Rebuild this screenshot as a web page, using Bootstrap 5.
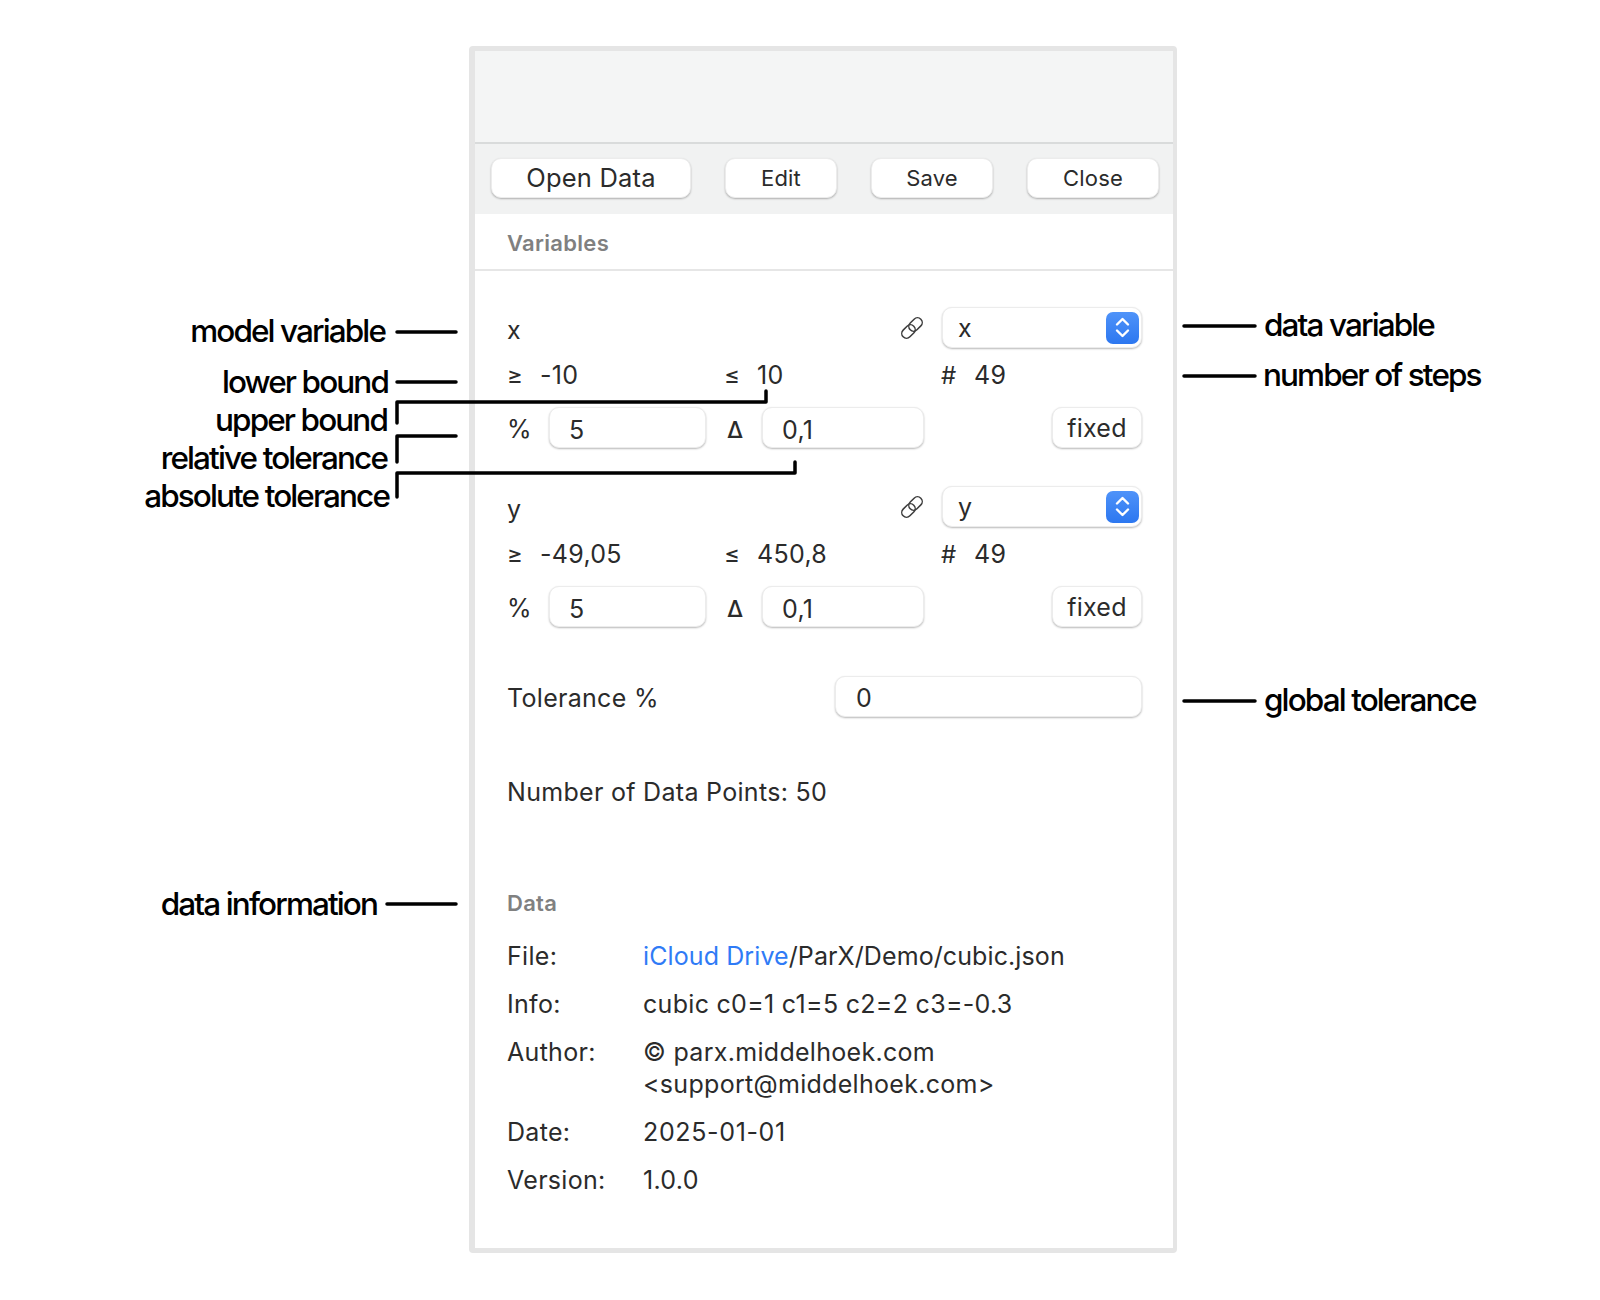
<!DOCTYPE html>
<html lang="en">
<head>
<meta charset="utf-8">
<title>ParX variables</title>
<link href="https://cdn.jsdelivr.net/npm/bootstrap@5.3.0/dist/css/bootstrap.min.css" rel="stylesheet">
<style>
html,body{margin:0;background:#fff;}
body{font-family:Inter,"Liberation Sans",sans-serif;color:#2b2b2b;font-size:25px;line-height:32px;letter-spacing:.3px;}
.stage{position:relative;width:1600px;height:1300px;padding:46px 0 0 469px;}
.panel-box{width:708px;height:1207px;border:5px solid #e5e5e5;border-left-width:6px;border-right-width:4px;border-radius:4px;background:#fff;}
.title-area{height:93px;background:#f4f5f5;border-bottom:2px solid #d9dbdb;}
.tool-area{height:70px;background:#f1f2f2;padding:14px 0 0 16px;gap:34px;}
.mac-btn{background:#fff;border:1px solid #ececec;border-radius:10px;box-shadow:0 1px 2px rgba(0,0,0,.28);color:#2b2b2b;height:40px;padding:0;font-size:22px;line-height:38px;letter-spacing:.2px;}
.mac-btn:hover{background:#fff;color:#2b2b2b;border-color:#ececec;}
.btn-open{width:200px;font-size:25.5px;}
.btn-edit{width:112px;}
.btn-save{width:122px;}
.btn-close-win{width:132px;}
.section-head{height:57px;border-bottom:2px solid #e6e6e6;padding-left:32px;color:#808080;font-size:22px;font-weight:600;line-height:58px;}
.body-area{padding:36px 31px 0 32px;}
.row-top{height:41px;}
.row-top .var-name{margin-top:4px;}
.link-ico{margin:0 17px 0 auto;width:26px;height:26px;}
.mac-select{width:200px;height:41px;border:1px solid #ececec;border-radius:10px;box-shadow:0 1px 2px rgba(0,0,0,.28);background:#fff;padding:0 2px 0 15px;}
.sel-arrows{width:33px;height:32px;border-radius:7px;background:linear-gradient(#4f93f9,#2c77f0);}
.row-bounds{display:grid;grid-template-columns:217px 217px 1fr;height:36px;margin:9px 0 14px;line-height:36px;}
.sym{display:inline-block;width:33px;font-size:24px;}
.row-edit{height:41px;margin-bottom:38px;}
.row-edit.last-edit{margin-bottom:49px;}
.sym-pct{width:42px;margin-top:2px;}
.sym-delta{width:35px;margin:4px 0 0 21px;font-size:23px;font-weight:500;}
.mac-input{height:41px;border:1px solid #ececec;border-radius:10px;box-shadow:0 1px 2px rgba(0,0,0,.28);background:#fff;padding-left:19px;line-height:45px;}
.in-pct{width:157px;}
.in-delta{width:162px;}
.in-tol{width:307px;padding-left:20px;margin-left:auto;line-height:43px;}
.btn-fixed{width:90px;font-size:25px;margin-left:auto;height:41px;line-height:36px;}
.row-tol{height:41px;line-height:45px;}
.row-points{margin-top:59px;}
.data-head{color:#808080;font-size:22px;font-weight:600;line-height:24px;margin-top:83px;}
.info-grid{display:grid;grid-template-columns:136px 1fr;row-gap:16px;margin-top:25px;}
.drive{color:#2f7bf6;}
.path-text{letter-spacing:.1px;}
.date-text{letter-spacing:.65px;}
.callouts{position:absolute;left:0;top:0;pointer-events:none;}
.note{position:absolute;color:#000;font-size:31.5px;font-weight:500;letter-spacing:-1.9px;line-height:34px;white-space:nowrap;}
.note-l{text-align:right;width:320px;}
.n-model{left:65px;top:314px;}
.n-lower{left:68px;top:365px;}
.n-upper{left:67px;top:403px;}
.n-rel{left:67px;top:441px;}
.n-abs{left:69px;top:479px;}
.n-info{left:57px;top:887px;}
.n-datav{left:1264px;top:308px;}
.n-steps{left:1263px;top:358px;}
.n-glob{left:1264px;top:683px;}
</style>
</head>
<body>
<div class="stage">
  <div class="panel-box">
    <div class="title-area"></div>
    <div class="tool-area d-flex">
      <button type="button" class="btn mac-btn btn-open">Open Data</button>
      <button type="button" class="btn mac-btn btn-edit">Edit</button>
      <button type="button" class="btn mac-btn btn-save">Save</button>
      <button type="button" class="btn mac-btn btn-close-win">Close</button>
    </div>
    <div class="section-head">Variables</div>
    <div class="body-area">
      <div class="row-top d-flex align-items-center">
        <span class="var-name">x</span>
        <svg class="link-ico" viewBox="0 0 26 26" fill="none" stroke="#3c3c3c" stroke-width="1.5"><g transform="rotate(-45 13 13)"><rect x="0.500" y="8.250" width="15" height="9.500" rx="4.750"/><rect x="10.500" y="8.250" width="15" height="9.500" rx="4.750"/></g></svg>
        <div class="mac-select d-flex align-items-center justify-content-between">
          <span>x</span>
          <span class="sel-arrows d-flex align-items-center justify-content-center"><svg width="17" height="27" viewBox="0 0 17 27" fill="none" stroke="#fff" stroke-width="2.4" stroke-linecap="round" stroke-linejoin="round"><path d="M3 10.500 8.500 5l5.500 5.500M3 16.500 8.500 22l5.500-5.500"/></svg></span>
        </div>
      </div>
      <div class="row-bounds">
        <div><span class="sym">≥</span>-10</div>
        <div><span class="sym">≤</span>10</div>
        <div><span class="sym">#</span>49</div>
      </div>
      <div class="row-edit d-flex align-items-center">
        <span class="sym-pct">%</span><div class="mac-input in-pct">5</div>
        <span class="sym-delta">∆</span><div class="mac-input in-delta">0,1</div>
        <button type="button" class="btn mac-btn btn-fixed">fixed</button>
      </div>
      <div class="row-top d-flex align-items-center">
        <span class="var-name">y</span>
        <svg class="link-ico" viewBox="0 0 26 26" fill="none" stroke="#3c3c3c" stroke-width="1.5"><g transform="rotate(-45 13 13)"><rect x="0.500" y="8.250" width="15" height="9.500" rx="4.750"/><rect x="10.500" y="8.250" width="15" height="9.500" rx="4.750"/></g></svg>
        <div class="mac-select d-flex align-items-center justify-content-between">
          <span>y</span>
          <span class="sel-arrows d-flex align-items-center justify-content-center"><svg width="17" height="27" viewBox="0 0 17 27" fill="none" stroke="#fff" stroke-width="2.4" stroke-linecap="round" stroke-linejoin="round"><path d="M3 10.500 8.500 5l5.500 5.500M3 16.500 8.500 22l5.500-5.500"/></svg></span>
        </div>
      </div>
      <div class="row-bounds">
        <div><span class="sym">≥</span>-49,05</div>
        <div><span class="sym">≤</span>450,8</div>
        <div><span class="sym">#</span>49</div>
      </div>
      <div class="row-edit last-edit d-flex align-items-center">
        <span class="sym-pct">%</span><div class="mac-input in-pct">5</div>
        <span class="sym-delta">∆</span><div class="mac-input in-delta">0,1</div>
        <button type="button" class="btn mac-btn btn-fixed">fixed</button>
      </div>
      <div class="row-tol d-flex">
        <span>Tolerance %</span>
        <div class="mac-input in-tol">0</div>
      </div>
      <div class="row-points">Number of Data Points: 50</div>
      <div class="data-head">Data</div>
      <div class="info-grid">
        <div>File:</div><div class="path-text"><span class="drive">iCloud Drive</span>/ParX/Demo/cubic.json</div>
        <div>Info:</div><div>cubic c0=1 c1=5 c2=2 c3=-0.3</div>
        <div>Author:</div><div>© parx.middelhoek.com<br>&lt;support@middelhoek.com&gt;</div>
        <div>Date:</div><div class="date-text">2025-01-01</div>
        <div>Version:</div><div>1.0.0</div>
      </div>
    </div>
  </div>

  <svg class="callouts" width="1600" height="1300" viewBox="0 0 1600 1300" fill="none" stroke="#000" stroke-width="3.5" stroke-linecap="round" stroke-linejoin="round">
    <path d="M397 332H456"/>
    <path d="M397 382H456"/>
    <path d="M397 423V402H766V391"/>
    <path d="M397 462V436H456"/>
    <path d="M397 497V473H795V462"/>
    <path d="M387 904H456"/>
    <path d="M1184 326H1255"/>
    <path d="M1184 376H1255"/>
    <path d="M1184 701H1255"/>
  </svg>
  <div class="note note-l n-model">model variable</div>
  <div class="note note-l n-lower">lower bound</div>
  <div class="note note-l n-upper">upper bound</div>
  <div class="note note-l n-rel">relative tolerance</div>
  <div class="note note-l n-abs">absolute tolerance</div>
  <div class="note note-l n-info">data information</div>
  <div class="note n-datav">data variable</div>
  <div class="note n-steps">number of steps</div>
  <div class="note n-glob">global tolerance</div>
</div>
<script src="https://cdn.jsdelivr.net/npm/bootstrap@5.3.0/dist/js/bootstrap.bundle.min.js"></script>
</body>
</html>
